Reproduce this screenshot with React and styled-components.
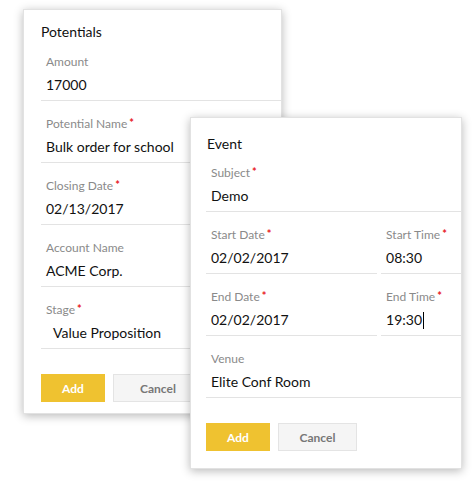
import React from "react";
import styled, { createGlobalStyle } from "styled-components";

const GlobalStyle = createGlobalStyle`
  body {
    margin: 0;
    background: #ffffff;
    font-family: Lato, "Open Sans", sans-serif;
  }
`;

const Stage = styled.div`
  position: relative;
  width: 474px;
  height: 485px;
  padding: 9px 0 0 23px;
  box-sizing: border-box;
`;

const Card = styled.div`
  box-sizing: border-box;
  width: ${(props) => props.w}px;
  height: ${(props) => props.h}px;
  background: #ffffff;
  border: 1px solid #e2e2e2;
  box-shadow: 0 2px 9px rgba(0, 0, 0, 0.28);
  padding: ${(props) => props.pt}px 0 0 ${(props) => props.pl}px;
  display: flex;
  flex-direction: column;
`;

const Overlay = styled.div`
  position: absolute;
  left: 190px;
  top: 117px;
  z-index: 2;
`;

const Title = styled.div`
  font-size: 14px;
  line-height: 14px;
  color: #111;
  padding-left: ${(props) => props.indent || 0}px;
  margin-bottom: ${(props) => props.gap || 0}px;
`;

const Row = styled.div`
  display: flex;
  gap: 4px;
`;

const Field = styled.div`
  flex: ${(props) => props.grow || 1};
  min-width: 0;
  padding: ${(props) => (props.first ? 0 : 15)}px 0 5px 5px;
  border-bottom: 1px solid #e3e3e3;
`;

const Label = styled.div`
  height: 16px;
  font-size: 12px;
  line-height: 16px;
  color: #8a8a8a;
  margin-bottom: 5px;
  white-space: nowrap;
`;

const Req = styled.span`
  display: inline-block;
  color: #e8171d;
  font-size: 11px;
  font-weight: 700;
  line-height: 0;
  position: relative;
  top: -1px;
  margin-left: 2px;
`;

const Value = styled.div`
  height: 20px;
  font-size: 14px;
  line-height: 20px;
  color: #111;
  padding-left: ${(props) => (props.select ? 7 : 0)}px;
  white-space: nowrap;
  display: flex;
  align-items: center;
`;

const Caret = styled.span`
  display: inline-block;
  width: 1px;
  height: 17px;
  background: #000;
  margin-left: 1px;
`;

const Actions = styled.div`
  display: flex;
  gap: 8px;
  margin-top: 25px;
`;

const Button = styled.div`
  box-sizing: border-box;
  height: 28px;
  width: ${(props) => props.w}px;
  display: flex;
  align-items: center;
  justify-content: center;
  font-size: 12px;
  font-weight: 700;
  flex-shrink: 0;
  background: ${(props) => (props.primary ? "#efc230" : "#f5f5f5")};
  color: ${(props) => (props.primary ? "#ffffff" : "#777777")};
  border: 1px solid ${(props) => (props.primary ? "#efc230" : "#e4e4e4")};
`;

const FieldItem = ({ label, value, required, first, select, caret, grow }) => (
  <Field first={first} grow={grow}>
    <Label>
      {label}
      {required && <Req>*</Req>}
    </Label>
    <Value select={select}>
      {value}
      {caret && <Caret />}
    </Value>
  </Field>
);

const potentialFields = [
  { label: "Amount", value: "17000" },
  { label: "Potential Name", value: "Bulk order for school", required: true },
  { label: "Closing Date", value: "02/13/2017", required: true },
  { label: "Account Name", value: "ACME Corp." },
  { label: "Stage", value: "Value Proposition", required: true, select: true },
];

export default function App() {
  return (
    <>
      <GlobalStyle />
      <Stage>
        <Card w={259} h={405} pt={15} pl={17}>
          <Title gap={15}>Potentials</Title>
          {potentialFields.map((f, i) => (
            <Row key={f.label}>
              <FieldItem {...f} first={i === 0} />
            </Row>
          ))}
          <Actions>
            <Button primary w={64}>Add</Button>
            <Button w={90}>Cancel</Button>
          </Actions>
        </Card>

        <Overlay>
          <Card w={272} h={352} pt={19} pl={15}>
            <Title indent={1} gap={14}>Event</Title>
            <Row>
              <FieldItem label="Subject" value="Demo" required first />
            </Row>
            <Row>
              <FieldItem label="Start Date" value="02/02/2017" required grow={173} />
              <FieldItem label="Start Time" value="08:30" required grow={78} />
            </Row>
            <Row>
              <FieldItem label="End Date" value="02/02/2017" required grow={173} />
              <FieldItem label="End Time" value="19:30" required caret grow={78} />
            </Row>
            <Row>
              <FieldItem label="Venue" value="Elite Conf Room" />
            </Row>
            <Actions>
              <Button primary w={64}>Add</Button>
              <Button w={79}>Cancel</Button>
            </Actions>
          </Card>
        </Overlay>
      </Stage>
    </>
  );
}
